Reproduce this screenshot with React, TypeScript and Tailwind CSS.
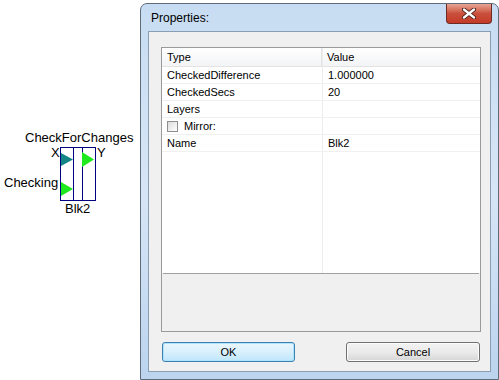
import React from 'react';

const uiFont = { fontFamily: '"Liberation Sans", Arial, sans-serif' };

const ROWS: { name: string; value: string; check?: boolean }[] = [
  { name: 'CheckedDifference', value: '1.000000' },
  { name: 'CheckedSecs', value: '20' },
  { name: 'Layers', value: '' },
  { name: 'Mirror:', value: '', check: true },
  { name: 'Name', value: 'Blk2' },
];

function Block() {
  return (
    <div className="absolute left-0 top-0 w-[140px] h-[230px] text-[13px] text-black leading-none" style={uiFont}>
      <span className="absolute left-[25px] top-[131px]">CheckForChanges</span>
      <span className="absolute left-[51px] top-[146px]">X</span>
      <span className="absolute left-[97px] top-[146px]">Y</span>
      <span className="absolute left-[4px] top-[176px]">Checking</span>
      <span className="absolute left-[65px] top-[202px]">Blk2</span>
      {/* block drawing */}
      <svg className="absolute left-[60px] top-[147px]" width="37" height="55" viewBox="0 0 37 55">
        <rect x="0.5" y="0.5" width="35" height="53" fill="none" stroke="#000080" />
        <line x1="13.5" y1="0" x2="13.5" y2="54" stroke="#000080" />
        <line x1="22.5" y1="0" x2="22.5" y2="54" stroke="#000080" />
        <polygon points="1,6 13,12.5 1,19" fill="#138585" />
        <polygon points="22,5 34,12.5 22,20" fill="#1ee81e" />
        <polygon points="1,35 13,42 1,49" fill="#1ee81e" />
      </svg>
    </div>
  );
}

function CloseButton() {
  return (
    <div className="absolute right-[6px] top-0 w-[46px] h-[20px] rounded-b-[4px] border border-t-0 border-[#6e2a25] bg-gradient-to-b from-[#e8a493] via-[#c9503c] to-[#c43a27] flex items-center justify-center">
      <svg width="14" height="11" viewBox="0 0 14 11">
        <path d="M2 1.5 L12 9.5 M12 1.5 L2 9.5" stroke="#3b1410" strokeWidth="4" strokeLinecap="round" />
        <path d="M2 1.5 L12 9.5 M12 1.5 L2 9.5" stroke="#ffffff" strokeWidth="2.4" strokeLinecap="round" />
      </svg>
    </div>
  );
}

function PropertyTable() {
  return (
    <div className="mt-[15px] ml-[12px] mr-[9px] h-[285px] border border-[#9a9a9a] bg-[#f0f0f0] flex flex-col">
      <div className="relative h-[225px] bg-white flex flex-col">
        <div className="absolute left-[160px] top-0 bottom-0 w-px bg-[#ececec]" />
        <div className="flex h-[19px] border-b border-[#e3e3e3] bg-gradient-to-b from-white to-[#f3f4f6]">
          <div className="w-[160px] pl-[5px] flex items-center border-r border-[#e3e3e3]">Type</div>
          <div className="flex-1 pl-[5px] flex items-center">Value</div>
        </div>
        {ROWS.map((r) => (
          <div key={r.name} className="relative flex h-[17px] border-b border-[#f0f0f0]">
            <div className="w-[160px] pl-[5px] flex items-center gap-[6px]">
              {r.check && (
                <span className="w-[11px] h-[11px] border border-[#8e8f8f] bg-gradient-to-br from-[#dcdcdc] to-white" />
              )}
              {r.name}
            </div>
            <div className="flex-1 pl-[6px] flex items-center">{r.value}</div>
          </div>
        ))}
      </div>
      <div className="h-px bg-[#a0a0a0] mx-[1px]" />
      <div className="flex-1" />
    </div>
  );
}

function Dialog() {
  return (
    <div className="absolute left-[140px] top-[3px] w-[359px] h-[377px] rounded-t-[7px] border border-[#5e6b7a] bg-gradient-to-b from-[#c7dcf2] via-[#d7e6f6] to-[#bcd4ee] flex flex-col">
      <div className="relative h-[27px] shrink-0 flex items-center pl-[10px] text-[12px] text-black" style={uiFont}>
        Properties:
        <CloseButton />
      </div>
      <div className="mx-[7px] mb-[7px] flex-1 border border-[#8a9db3] bg-[#f0f0f0] flex flex-col text-[11px] text-black" style={uiFont}>
        <PropertyTable />
        <div className="flex justify-between ml-[13px] mr-[10px] mt-[10px]">
          <button className="w-[133px] h-[20px] rounded-[3px] border border-[#3c7fb1] bg-gradient-to-b from-[#eaf6fd] via-[#d9f0fc] to-[#bee6fd] shadow-[inset_0_0_0_1px_#aee4ff]">
            OK
          </button>
          <button className="w-[134px] h-[20px] rounded-[3px] border border-[#707070] bg-gradient-to-b from-[#f2f2f2] via-[#ebebeb] to-[#d6d6d6] shadow-[inset_0_0_0_1px_#fcfcfc]">
            Cancel
          </button>
        </div>
      </div>
    </div>
  );
}

export default function App() {
  return (
    <div className="relative w-[499px] h-[380px] bg-white overflow-hidden">
      <Block />
      <Dialog />
    </div>
  );
}
